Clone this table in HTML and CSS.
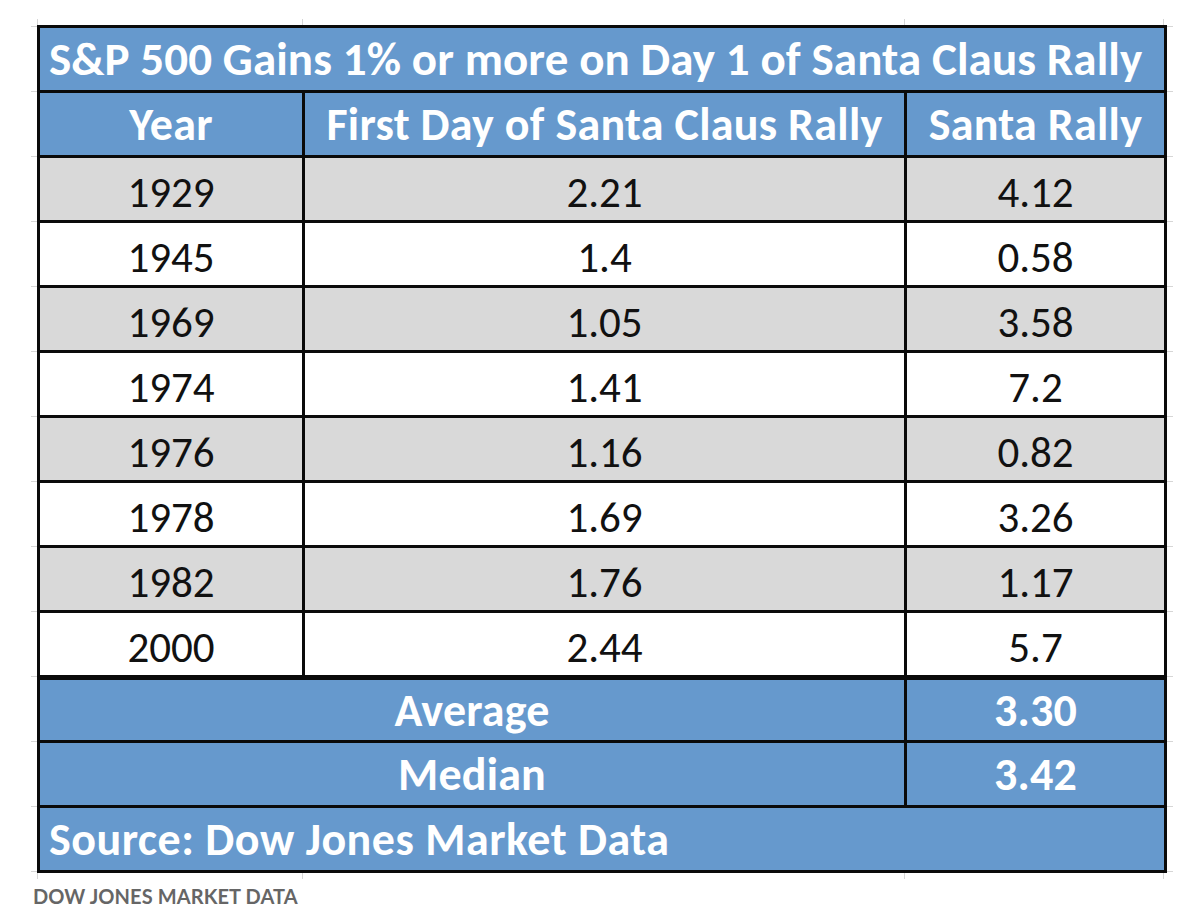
FILE: index.html
```html
<!DOCTYPE html>
<html>
<head>
<meta charset="utf-8">
<link rel="stylesheet" href="styles.css">
</head>
<body>
<div class="sheet">
<div class="grid">
<table class="rally">
  <colgroup>
    <col class="c-year">
    <col class="c-first">
    <col class="c-santa">
  </colgroup>
  <tr class="title"><td colspan="3">S&amp;P 500 Gains 1% or more on Day 1 of Santa Claus Rally</td></tr>
  <tr class="head"><td>Year</td><td>First Day of Santa Claus Rally</td><td>Santa Rally</td></tr>
  <tr class="row gray"><td>1929</td><td>2.21</td><td>4.12</td></tr>
  <tr class="row"><td>1945</td><td>1.4</td><td>0.58</td></tr>
  <tr class="row gray"><td>1969</td><td>1.05</td><td>3.58</td></tr>
  <tr class="row"><td>1974</td><td>1.41</td><td>7.2</td></tr>
  <tr class="row gray"><td>1976</td><td>1.16</td><td>0.82</td></tr>
  <tr class="row"><td>1978</td><td>1.69</td><td>3.26</td></tr>
  <tr class="row gray"><td>1982</td><td>1.76</td><td>1.17</td></tr>
  <tr class="row"><td>2000</td><td>2.44</td><td>5.7</td></tr>
  <tr class="sum first"><td colspan="2">Average</td><td>3.30</td></tr>
  <tr class="sum"><td colspan="2">Median</td><td>3.42</td></tr>
  <tr class="source"><td colspan="3">Source: Dow Jones Market Data</td></tr>
</table>
</div>
</div>
<p class="credit">DOW JONES MARKET DATA</p>
</body>
</html>
```

FILE: styles.css
```css
html, body {
  margin: 0;
  padding: 0;
  background: #ffffff;
}

.sheet {
  padding: 19px 0 0 31px;
}

/* faint spreadsheet gridlines peeking out around the table */
.grid {
  width: fit-content;
  padding: 6px;
  background:
    linear-gradient(#d6d6d6, #d6d6d6) 6px 0 / 1px 100% no-repeat,
    linear-gradient(#d6d6d6, #d6d6d6) 271px 0 / 1px 100% no-repeat,
    linear-gradient(#d6d6d6, #d6d6d6) 873px 0 / 1px 100% no-repeat,
    linear-gradient(#d6d6d6, #d6d6d6) 1132px 0 / 1px 100% no-repeat,
    repeating-linear-gradient(to bottom, #d6d6d6 0 1px, transparent 1px 65px) 0 7px / 100% 100% no-repeat;
}

.rally {
  border-collapse: collapse;
  table-layout: fixed;
  width: 1127px;
  font-family: "Carlito", "Lato", "Liberation Sans", sans-serif;
  border: 3px solid #0a0a0a;
}

.c-year { width: 265px; }
.c-first { width: 602px; }
.c-santa { width: 260px; }

.rally td {
  border: 3px solid #0a0a0a;
  height: 62px;
  padding: 0;
  text-align: center;
  vertical-align: middle;
  line-height: 1;
  white-space: nowrap;
}

.title td,
.head td,
.sum td,
.source td {
  background: #6699cd;
  color: #ffffff;
  font-weight: 700;
  font-size: 46px;
  letter-spacing: 0.2px;
}

.rally .title td {
  font-size: 47px;
  letter-spacing: 0.1px;
}

.title td,
.source td {
  text-align: left;
  padding-left: 9px;
}

.rally .source td {
  letter-spacing: 0.5px;
}

.head td {
  font-size: 46px;
  letter-spacing: 0.3px;
}

.rally .row td {
  background: #ffffff;
  color: #111111;
  font-size: 43px;
  height: 56px;
  padding-top: 6px;
}

.rally .row.gray td {
  background: #d9d9d9;
}

.rally .sum.first td {
  border-top: 5px solid #0a0a0a;
  height: 60px;
}

.credit {
  margin: 5px 0 0 33px;
  font-family: "Lato", "Liberation Sans", sans-serif;
  font-weight: 700;
  font-size: 20px;
  line-height: 24px;
  color: #666666;
  letter-spacing: 0.1px;
}
```
